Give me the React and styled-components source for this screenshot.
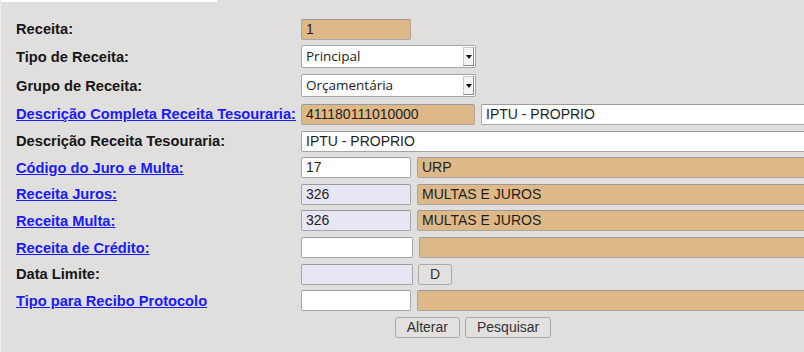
import React from 'react';
import styled, { createGlobalStyle } from 'styled-components';

const colors = {
  page: '#e0dfdd',
  tan: '#deb887',
  lavender: '#e6e6f4',
  white: '#ffffff',
  border: '#a6a6a6',
  link: '#1a1aff',
};

const GlobalStyle = createGlobalStyle`
  html, body {
    margin: 0;
    padding: 0;
    background: ${colors.page};
    overflow: hidden;
  }
  body {
    font-family: "Liberation Sans", Arial, sans-serif;
  }
`;

const Page = styled.div`
  width: 804px;
  height: 352px;
  overflow: hidden;
  background: ${colors.page};
  border-left: 1px solid #eeeeee;
  box-sizing: border-box;
`;

const TopStrip = styled.div`
  width: 216px;
  height: 2px;
  background: #ffffff;
`;

const Form = styled.div`
  width: 929px;
  padding: 14px 0 0 15px;
  box-sizing: border-box;
`;

const Row = styled.div`
  display: grid;
  grid-template-columns: 285px 1fr;
  align-items: center;
  height: ${(p) => p.$h}px;
`;

const Label = styled.div`
  font-size: 14.67px;
  font-weight: bold;
  color: #161616;
  white-space: nowrap;
`;

const LinkLabel = styled.a`
  font-size: 14.67px;
  font-weight: bold;
  color: ${colors.link};
  text-decoration: underline;
  white-space: nowrap;
  cursor: pointer;
`;

const Fields = styled.div`
  display: flex;
  align-items: center;
  gap: ${(p) => p.$gap ?? 6}px;
  min-width: 0;
`;

const Field = styled.div`
  box-sizing: border-box;
  height: 21px;
  width: ${(p) => (p.$w ? `${p.$w}px` : 'auto')};
  flex: ${(p) => (p.$grow ? '1 1 auto' : '0 0 auto')};
  background: ${(p) => colors[p.$bg || 'white']};
  border: 1px solid ${colors.border};
  border-top-color: #9a9a9a;
  border-radius: 2px;
  padding: 0 4px;
  font-size: 14px;
  line-height: 19px;
  color: #1e1e1e;
  white-space: nowrap;
  overflow: hidden;
`;

const Select = styled.div`
  box-sizing: border-box;
  display: flex;
  align-items: stretch;
  width: 175px;
  height: 23px;
  background: #fff;
  border: 1px solid ${colors.border};
  border-radius: 2px;
  font-family: "Open Sans", "DejaVu Sans", sans-serif;
  font-size: 13.5px;
  color: #222;
`;

const SelectText = styled.span`
  flex: 1;
  padding-left: 4px;
  line-height: 21px;
`;

const Arrow = styled.span`
  width: 11px;
  margin: 1px 1px 1px 0;
  box-sizing: border-box;
  border: 1px solid #c8c8c8;
  border-right-color: #8a8a8a;
  border-bottom-color: #8a8a8a;
  background: #f4f4f4;
  display: flex;
  align-items: center;
  justify-content: center;

  &::after {
    content: '';
    border-left: 3px solid transparent;
    border-right: 3px solid transparent;
    border-top: 4px solid #111;
  }
`;

const Button = styled.button`
  box-sizing: border-box;
  height: 21px;
  padding: 0 ${(p) => p.$pad ?? 11}px;
  background: #e2e1df;
  border: 1px solid #a9a9a9;
  border-radius: 3px;
  font-family: "Liberation Sans", Arial, sans-serif;
  font-size: 14px;
  color: #333;
  line-height: 19px;
`;

const Actions = styled.div`
  display: flex;
  justify-content: center;
  gap: 5px;
  padding-top: 3px;
`;

export default function App() {
  return (
    <Page>
      <GlobalStyle />
      <TopStrip />
      <Form>
        <Row $h={26}>
          <Label>Receita:</Label>
          <Fields>
            <Field $w={110} $bg="tan">1</Field>
          </Fields>
        </Row>
        <Row $h={29}>
          <Label>Tipo de Receita:</Label>
          <Fields>
            <Select>
              <SelectText>Principal</SelectText>
              <Arrow />
            </Select>
          </Fields>
        </Row>
        <Row $h={29}>
          <Label>Grupo de Receita:</Label>
          <Fields>
            <Select>
              <SelectText>Orçamentária</SelectText>
              <Arrow />
            </Select>
          </Fields>
        </Row>
        <Row $h={28}>
          <LinkLabel>Descrição Completa Receita Tesouraria:</LinkLabel>
          <Fields>
            <Field $w={174} $bg="tan">411180111010000</Field>
            <Field $grow>IPTU - PROPRIO</Field>
          </Fields>
        </Row>
        <Row $h={26}>
          <Label>Descrição Receita Tesouraria:</Label>
          <Fields>
            <Field $grow>IPTU - PROPRIO</Field>
          </Fields>
        </Row>
        <Row $h={27}>
          <LinkLabel>Código do Juro e Multa:</LinkLabel>
          <Fields>
            <Field $w={110}>17</Field>
            <Field $grow $bg="tan">URP</Field>
          </Fields>
        </Row>
        <Row $h={26}>
          <LinkLabel>Receita Juros:</LinkLabel>
          <Fields>
            <Field $w={110} $bg="lavender">326</Field>
            <Field $grow $bg="tan">MULTAS E JUROS</Field>
          </Fields>
        </Row>
        <Row $h={27}>
          <LinkLabel>Receita Multa:</LinkLabel>
          <Fields>
            <Field $w={110} $bg="lavender">326</Field>
            <Field $grow $bg="tan">MULTAS E JUROS</Field>
          </Fields>
        </Row>
        <Row $h={27}>
          <LinkLabel>Receita de Crédito:</LinkLabel>
          <Fields>
            <Field $w={112} />
            <Field $grow $bg="tan" />
          </Fields>
        </Row>
        <Row $h={26}>
          <Label>Data Limite:</Label>
          <Fields $gap={5}>
            <Field $w={112} $bg="lavender" />
            <Button $pad={11}>D</Button>
          </Fields>
        </Row>
        <Row $h={27}>
          <LinkLabel>Tipo para Recibo Protocolo</LinkLabel>
          <Fields>
            <Field $w={110} />
            <Field $grow $bg="tan" />
          </Fields>
        </Row>
        <Actions>
          <Button>Alterar</Button>
          <Button>Pesquisar</Button>
        </Actions>
      </Form>
    </Page>
  );
}
